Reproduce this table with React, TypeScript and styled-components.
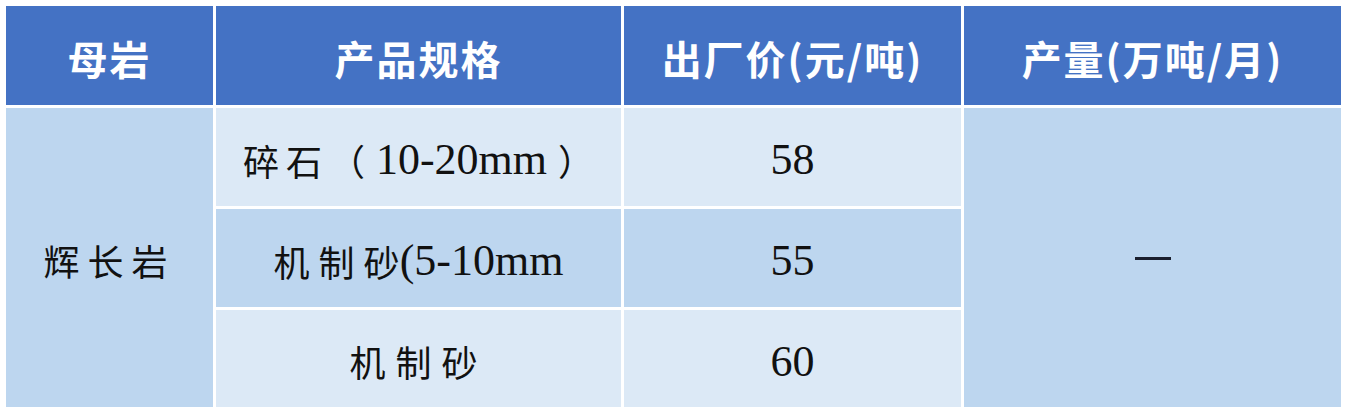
import React from "react";
import styled, { createGlobalStyle } from "styled-components";

const Global = createGlobalStyle`
  html, body {
    margin: 0;
    padding: 0;
    background: #ffffff;
  }
`;

const Page = styled.div`
  width: 1350px;
  height: 414px;
  padding: 6px 0 0 6px;
  box-sizing: border-box;
`;

const Table = styled.div`
  display: grid;
  width: 1335px;
  grid-template-columns: 207px 405px 337px 377px;
  grid-template-rows: 99px 98px 98px 97px;
  gap: 3px;
  background: #ffffff;
`;

const HeadCell = styled.div`
  display: flex;
  align-items: center;
  justify-content: center;
  padding-top: 5px;
  box-sizing: border-box;
  background: #4472c4;
  color: #ffffff;
  font-family: "Noto Sans CJK SC", "Noto Sans", sans-serif;
  font-weight: 700;
  font-size: 40px;
  letter-spacing: 2px;
`;

const Cell = styled.div<{ $tone: "mid" | "light"; $span?: number }>`
  display: flex;
  align-items: center;
  justify-content: center;
  padding-top: 5px;
  box-sizing: border-box;
  grid-row: ${(p) => (p.$span ? `span ${p.$span}` : "auto")};
  background: ${(p) => (p.$tone === "mid" ? "#bdd6ef" : "#dce9f6")};
  color: #111111;
  font-family: "Liberation Serif", "Noto Sans CJK SC", serif;
  font-size: 44px;
  white-space: pre;
`;

const Han = styled.span<{ $spacing: number }>`
  font-family: "Noto Sans CJK SC", sans-serif;
  font-weight: 400;
  font-size: 36px;
  letter-spacing: ${(p) => p.$spacing}px;
`;

const Dash = styled.span`
  display: block;
  width: 36px;
  height: 3px;
  margin-top: -4px;
  background: #1a1f2e;
`;

const headers = ["母岩", "产品规格", "出厂价(元/吨)", "产量(万吨/月)"];

export default function App() {
  return (
    <>
      <Global />
      <Page>
        <Table>
          {headers.map((h) => (
            <HeadCell key={h}>{h}</HeadCell>
          ))}

          <Cell $tone="mid" $span={3}>
            <Han $spacing={8}>辉长岩</Han>
          </Cell>
          <Cell $tone="light">
            <Han $spacing={7}>碎石</Han>
            <Han $spacing={0}>（</Han> 10-20mm <Han $spacing={0}>）</Han>
          </Cell>
          <Cell $tone="light">58</Cell>
          <Cell $tone="mid" $span={3}>
            <Dash />
          </Cell>

          <Cell $tone="mid">
            <Han $spacing={9}>机制</Han>
            <Han $spacing={0}>砂</Han>(5-10mm
          </Cell>
          <Cell $tone="mid">55</Cell>

          <Cell $tone="light">
            <Han $spacing={10}>机制砂</Han>
          </Cell>
          <Cell $tone="light">60</Cell>
        </Table>
      </Page>
    </>
  );
}
